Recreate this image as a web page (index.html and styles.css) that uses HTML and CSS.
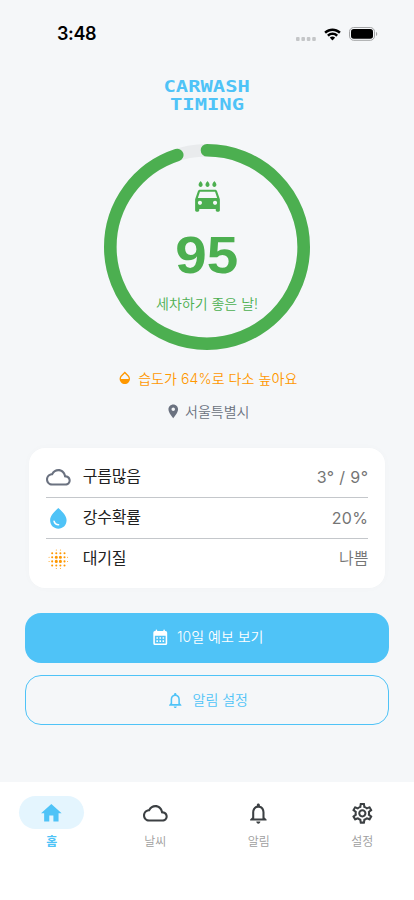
FILE: index.html
```html
<!DOCTYPE html>
<html lang="ko">
<head>
<meta charset="utf-8">
<meta name="viewport" content="width=device-width, initial-scale=1">
<title>Carwash Timing</title>
<link rel="stylesheet" href="styles.css">
</head>
<body>
<div class="app">
  <header class="status">
    <span class="clock">3:48</span>
    <div class="indicators">
      <svg class="signal" viewBox="0 0 20 4"><rect x="0" width="3.6" height="4" rx="1"/><rect x="5.4" width="3.6" height="4" rx="1"/><rect x="10.8" width="3.6" height="4" rx="1"/><rect x="16.2" width="3.6" height="4" rx="1"/></svg>
      <svg class="wifi" viewBox="0 0 17 12.4"><path d="M8.5 2.6c2.4 0 4.6.9 6.3 2.5.1.1.3.1.5 0l1.2-1.3c.2-.1.2-.3 0-.5-4.5-4.3-11.5-4.3-16 0-.1.2-.1.4 0 .5l1.2 1.3c.2.1.4.1.5 0C3.900 3.500 6.100 2.600 8.500 2.600zM8.500 6.700c1.300 0 2.600.5 3.500 1.400.2.1.4.1.5 0l1.300-1.400c.1-.1.1-.3 0-.5-3-2.800-7.500-2.800-10.500 0-.2.200-.2.400 0 .5l1.300 1.400c.1.1.4.1.5 0 .9-.9 2.100-1.400 3.400-1.400zM11 9.500c.1-.1.1-.3 0-.4-1.500-1.300-3.600-1.300-5.100 0-.1.100-.1.300 0 .4l2.300 2.400c.1.1.3.1.5 0z"/></svg>
      <svg class="battery" viewBox="0 0 29 14"><rect x=".5" y=".5" width="25" height="12.8" rx="4.2" fill="none" stroke="#a3a4a6"/><rect x="2" y="2" width="22" height="9.800" rx="2.800"/><path d="M27 4.700v4.400c1.700-.7 1.700-3.700 0-4.400z" fill="#a3a4a6"/></svg>
    </div>
  </header>

  <h1 class="logo"><span>CARWASH</span><span>TIMING</span></h1>

  <section class="gauge">
    <svg class="ring" viewBox="0 0 206 206">
      <circle class="track" cx="103" cy="103" r="96.700"/>
      <circle class="value" cx="103" cy="103" r="96.700" pathLength="100" stroke-dasharray="95 100" transform="rotate(-90 103 103)"/>
    </svg>
    <div class="gauge-body">
      <svg class="car" viewBox="0 0 24 24"><path d="M17 5c.83 0 1.5-.67 1.5-1.5 0-1-1.5-2.7-1.5-2.7s-1.5 1.7-1.5 2.7c0 .83.67 1.5 1.5 1.5zm-5 0c.83 0 1.5-.67 1.5-1.5 0-1-1.5-2.7-1.5-2.7s-1.5 1.7-1.5 2.7c0 .83.67 1.5 1.5 1.5zM7 5c.83 0 1.5-.67 1.5-1.5C8.5 2.5 7 .8 7 .8S5.5 2.5 5.5 3.5C5.5 4.330 6.170 5 7 5zm11.920 3.010C18.720 7.420 18.160 7 17.500 7h-11c-.66 0-1.210.42-1.420 1.010L3 14v8c0 .55.45 1 1 1h1c.55 0 1-.45 1-1v-1h12v1c0 .55.45 1 1 1h1c.55 0 1-.45 1-1v-8l-2.080-5.990zM6.500 18c-.83 0-1.500-.67-1.500-1.500S5.670 15 6.500 15s1.500.67 1.500 1.500S7.330 18 6.500 18zm11 0c-.83 0-1.500-.67-1.500-1.500s.67-1.500 1.500-1.500 1.500.67 1.500 1.500-.67 1.500-1.500 1.500zM5 13l1.500-4.500h11L19 13H5z"/></svg>
      <strong class="score">95</strong>
      <span class="verdict">세차하기 좋은 날!</span>
    </div>
  </section>

  <p class="humidity">
    <svg viewBox="0 0 24 24"><path d="M17.660 8L12 2.350 6.340 8C4.780 9.560 4 11.640 4 13.640s.78 4.110 2.340 5.670 3.610 2.350 5.660 2.350 4.100-.79 5.660-2.350S20 15.640 20 13.640 19.220 9.560 17.660 8zM6 14c.01-2 .62-3.270 1.760-4.400L12 5.270l4.240 4.380C17.380 10.770 17.990 12 18 14H6z"/></svg>
    <span>습도가 64%로 다소 높아요</span>
  </p>
  <p class="place">
    <svg viewBox="0 0 24 24"><path d="M12 2C8.130 2 5 5.130 5 9c0 5.250 7 13 7 13s7-7.750 7-13c0-3.870-3.130-7-7-7zm0 9.500c-1.380 0-2.500-1.120-2.500-2.500s1.120-2.500 2.500-2.500 2.500 1.120 2.500 2.500-1.120 2.500-2.500 2.500z"/></svg>
    <span>서울특별시</span>
  </p>

  <ul class="card">
    <li>
      <svg class="grey" viewBox="0 0 24 24"><path d="M19.350 10.040C18.670 6.590 15.640 4 12 4 9.110 4 6.600 5.640 5.350 8.040 2.340 8.360 0 10.910 0 14c0 3.310 2.690 6 6 6h13c2.760 0 5-2.240 5-5 0-2.640-2.050-4.780-4.650-4.960zM19 18H6c-2.210 0-4-1.790-4-4 0-2.050 1.530-3.760 3.560-3.970l1.070-.11.5-.95C8.080 7.140 9.940 6 12 6c2.620 0 4.880 1.860 5.390 4.430l.3 1.500 1.530.11c1.560.1 2.780 1.410 2.780 2.960 0 1.650-1.350 3-3 3z"/></svg>
      <span class="name">구름많음</span><span class="reading">3° / 9°</span>
    </li>
    <li>
      <svg class="blue" viewBox="0 0 24 24"><path d="M12 2c-5.330 4.550-8 8.480-8 11.800 0 4.980 3.800 8.200 8 8.200s8-3.220 8-8.200c0-3.320-2.670-7.250-8-11.800zM7.830 14c.37 0 .67.26.74.62.41 2.220 2.280 2.980 3.640 2.870.43-.02.79.32.79.75 0 .4-.32.73-.72.75-2.130.13-4.620-1.090-5.190-4.120-.08-.45.28-.87.740-.87z"/></svg>
      <span class="name">강수확률</span><span class="reading">20%</span>
    </li>
    <li>
      <svg class="orange" viewBox="0 0 24 24">
        <g stroke-linecap="round" stroke="currentColor" fill="none">
          <path stroke-width="3" d="M10 10h0M14 10h0M10 14h0M14 14h0"/>
          <path stroke-width="2" d="M6 6h0M10 6h0M14 6h0M18 6h0M6 10h0M18 10h0M6 14h0M18 14h0M6 18h0M10 18h0M14 18h0M18 18h0"/>
          <path stroke-width="1" d="M10 3h0M14 3h0M10 21h0M14 21h0M3 10h0M3 14h0M21 10h0M21 14h0"/>
        </g>
      </svg>
      <span class="name">대기질</span><span class="reading ko">나쁨</span>
    </li>
  </ul>

  <div class="actions">
    <button class="btn primary">
      <svg viewBox="0 0 24 24"><path fill-rule="evenodd" d="M19 4h-1V3a1 1 0 0 0-2 0v1H8V3a1 1 0 0 0-2 0v1H5a2 2 0 0 0-2 2v14a2 2 0 0 0 2 2h14a2 2 0 0 0 2-2V6a2 2 0 0 0-2-2zM5 10h14v10H5z"/><path d="M7 12h2v2H7zM11 12h2v2h-2zM15 12h2v2h-2zM7 16h2v2H7zM11 16h2v2h-2zM15 16h2v2h-2z"/></svg>
      <span>10일 예보 보기</span>
    </button>
    <button class="btn outline">
      <svg viewBox="0 0 24 24"><path d="M12 22c1.100 0 2-.9 2-2h-4c0 1.100.9 2 2 2zm6-6v-5c0-3.070-1.630-5.640-4.500-6.320V4c0-.83-.67-1.500-1.500-1.500s-1.500.67-1.500 1.500v.68C7.640 5.360 6 7.920 6 11v5l-2 2v1h16v-1l-2-2zm-2 1H8v-6c0-2.480 1.510-4.500 4-4.500s4 2.020 4 4.500v6z"/></svg>
      <span>알림 설정</span>
    </button>
  </div>

  <nav class="tabs">
    <a class="tab active">
      <span class="pill"><svg viewBox="0 0 24 24"><path d="M10 20v-6h4v6h5v-8h3L12 3 2 12h3v8z"/></svg></span>
      <span class="label">홈</span>
    </a>
    <a class="tab">
      <span class="pill"><svg viewBox="0 0 24 24"><path d="M19.350 10.040C18.670 6.590 15.640 4 12 4 9.110 4 6.600 5.640 5.350 8.040 2.340 8.360 0 10.910 0 14c0 3.310 2.690 6 6 6h13c2.760 0 5-2.240 5-5 0-2.640-2.050-4.780-4.650-4.960zM19 18H6c-2.210 0-4-1.790-4-4 0-2.050 1.530-3.760 3.560-3.970l1.070-.11.5-.95C8.080 7.140 9.940 6 12 6c2.620 0 4.880 1.860 5.390 4.430l.3 1.500 1.530.11c1.560.1 2.780 1.410 2.780 2.960 0 1.650-1.350 3-3 3z"/></svg></span>
      <span class="label">날씨</span>
    </a>
    <a class="tab">
      <span class="pill"><svg viewBox="0 0 24 24"><path d="M12 22c1.100 0 2-.9 2-2h-4c0 1.100.9 2 2 2zm6-6v-5c0-3.070-1.630-5.640-4.500-6.320V4c0-.83-.67-1.500-1.500-1.500s-1.500.67-1.500 1.500v.68C7.640 5.360 6 7.920 6 11v5l-2 2v1h16v-1l-2-2zm-2 1H8v-6c0-2.480 1.510-4.500 4-4.500s4 2.020 4 4.500v6z"/></svg></span>
      <span class="label">알림</span>
    </a>
    <a class="tab">
      <span class="pill"><svg viewBox="0 0 24 24"><path d="M19.430 12.980c.04-.32.07-.64.07-.98 0-.34-.03-.66-.07-.98l2.110-1.650c.19-.15.24-.42.12-.64l-2-3.460c-.09-.16-.26-.25-.44-.25-.06 0-.12.01-.17.03l-2.490 1c-.52-.4-1.080-.73-1.690-.98l-.38-2.650C14.460 2.180 14.250 2 14 2h-4c-.25 0-.46.18-.49.42l-.38 2.650c-.61.25-1.170.59-1.690.98l-2.490-1c-.06-.02-.12-.03-.18-.03-.17 0-.34.09-.43.25l-2 3.460c-.13.22-.07.49.12.64l2.110 1.650c-.04.32-.07.65-.07.98 0 .33.03.66.07.98l-2.110 1.650c-.19.15-.24.42-.12.64l2 3.460c.09.16.26.25.44.25.06 0 .12-.01.17-.03l2.490-1c.52.4 1.080.73 1.690.98l.38 2.650c.03.24.24.42.49.42h4c.25 0 .46-.18.49-.42l.38-2.650c.61-.25 1.170-.59 1.690-.98l2.490 1c.06.02.12.03.18.03.17 0 .34-.09.43-.25l2-3.460c.12-.22.07-.49-.12-.64l-2.110-1.650zm-1.980-1.710c.04.31.05.52.05.73 0 .21-.02.43-.05.73l-.14 1.130.89.7 1.080.84-.7 1.210-1.270-.51-1.040-.42-.9.68c-.43.32-.84.56-1.250.73l-1.060.43-.16 1.130-.2 1.350h-1.400l-.19-1.350-.16-1.130-1.060-.43c-.43-.18-.83-.41-1.230-.71l-.91-.7-1.060.43-1.270.51-.7-1.210 1.080-.84.89-.7-.14-1.130c-.03-.31-.05-.54-.05-.74s.02-.43.05-.73l.14-1.130-.89-.7-1.080-.84.7-1.210 1.270.51 1.040.42.9-.68c.43-.32.84-.56 1.250-.73l1.060-.43.16-1.130.2-1.350h1.390l.19 1.350.16 1.130 1.060.43c.43.18.83.41 1.230.71l.91.7 1.060-.43 1.270-.51.7 1.210-1.070.85-.89.7.14 1.130zM12 8c-2.210 0-4 1.790-4 4s1.790 4 4 4 4-1.790 4-4-1.790-4-4-4zm0 6c-1.100 0-2-.9-2-2s.9-2 2-2 2 .9 2 2-.9 2-2 2z"/></svg></span>
      <span class="label">설정</span>
    </a>
  </nav>
</div>
</body>
</html>
```
FILE: styles.css
```css
* { box-sizing: border-box; margin: 0; padding: 0; }

body {
  background: #f5f7f9;
  font-family: Inter, "Noto Sans CJK KR", sans-serif;
  color: #212121;
}

svg { display: block; fill: currentColor; flex: none; }

.app {
  width: 414px;
  height: 900px;
  display: flex;
  flex-direction: column;
  overflow: hidden;
}

.status {
  height: 68px;
  padding: 0 36px 0 57px;
  display: flex;
  align-items: center;
  justify-content: space-between;
  color: #000;
}
.clock { font-size: 18px; font-weight: 600; line-height: 20px; letter-spacing: -0.4px; }
.indicators { display: flex; align-items: center; gap: 8px; }
.signal { width: 20px; height: 4px; margin-top: 9px; color: #c4c6c8; }
.wifi { width: 17px; height: 13px; }
.battery { width: 29px; height: 14px; }

.logo {
  margin-top: 10px;
  height: 36px;
  display: flex;
  flex-direction: column;
  align-items: center;
  color: #4fc3f7;
  font: 700 15.5px/18px "DejaVu Sans Mono", "Liberation Mono", monospace;
}
.logo span { transform: scaleX(1.32); }

.gauge {
  width: 206px;
  height: 206px;
  margin: 30px auto 0;
  display: grid;
  color: #4caf50;
}
.ring, .gauge-body { grid-area: 1 / 1; }
.ring { width: 206px; height: 206px; }
.ring circle { fill: none; stroke-width: 12.6; }
.track { stroke: #e9ebed; }
.value { stroke: #4caf50; stroke-linecap: round; }
.gauge-body { display: flex; flex-direction: column; align-items: center; padding-top: 36px; }
.car { width: 33px; height: 33px; }
.score {
  margin-top: 12px;
  font: 700 51.5px/60px "Liberation Sans", sans-serif;
  transform: scaleX(1.1);
}
.verdict { margin-top: 9px; font-size: 14px; line-height: 20px; font-weight: 350; }

.humidity, .place { display: flex; align-items: center; justify-content: center; height: 20px; font-weight: 350; }
.humidity { margin-top: 18px; gap: 6px; color: #ff9800; font-size: 14px; letter-spacing: 0.08px; }
.humidity svg { width: 15.600px; height: 15.600px; }
.place { margin-top: 13px; gap: 4px; color: #6b7280; font-size: 14px; }
.place svg { width: 16.500px; height: 16.500px; }

.card {
  list-style: none;
  margin: 27px 29px 0;
  height: 140px;
  padding: 9px 17px 8px;
  border-radius: 16px;
  background: #fff;
  box-shadow: 0 0 8px rgba(0, 0, 0, 0.02);
}
.card li {
  height: 41px;
  display: flex;
  align-items: center;
  border-bottom: 1px solid #c4c7cb;
}
.card li:last-child { border-bottom: 0; height: 40px; }
.card svg { width: 24.700px; height: 24.700px; }
.name { margin: -2px 0 0 12px; font-size: 16px; line-height: 24px; letter-spacing: -0.2px; }
.reading { margin-left: auto; font-size: 16px; color: #757575; line-height: 24px; letter-spacing: 0.4px; margin-right: -0.4px; }
.ko { margin-top: -2px; letter-spacing: 0; font-weight: 350; }
.grey { color: #6b7280; }
.blue { color: #4fc3f7; }
.orange { color: #ff9800; }

.actions { margin: 24.700px 25px 0; display: flex; flex-direction: column; gap: 12.600px; }
.btn {
  height: 50px;
  border: 0;
  border-radius: 16px;
  display: flex;
  align-items: center;
  justify-content: center;
  gap: 8px;
  font: 350 14px/20px Inter, "Noto Sans CJK KR", sans-serif;
}
.btn span { margin-top: -1px; }
.btn svg { width: 18.500px; height: 18.500px; }
.primary { background: #4fc3f7; color: #fff; }
.outline { background: transparent; border: 1px solid #4fc3f7; color: #4fc3f7; }

.tabs {
  margin-top: auto;
  height: 118px;
  padding-top: 14px;
  display: grid;
  grid-template-columns: repeat(4, 1fr);
  background: #fff;
}
.tab { display: flex; flex-direction: column; align-items: center; color: #3c4043; }
.pill { width: 65px; height: 33px; padding-top: 1px; border-radius: 17px; display: grid; place-items: center; }
.pill svg { width: 24.700px; height: 24.700px; }
.label { margin-top: 5px; font-size: 12px; line-height: 16px; color: #9e9e9e; font-weight: 350; }
.active { color: #4fc3f7; }
.active .pill { background: #e4f5fe; }
.active .label { color: #4fc3f7; font-weight: 700; }
```
